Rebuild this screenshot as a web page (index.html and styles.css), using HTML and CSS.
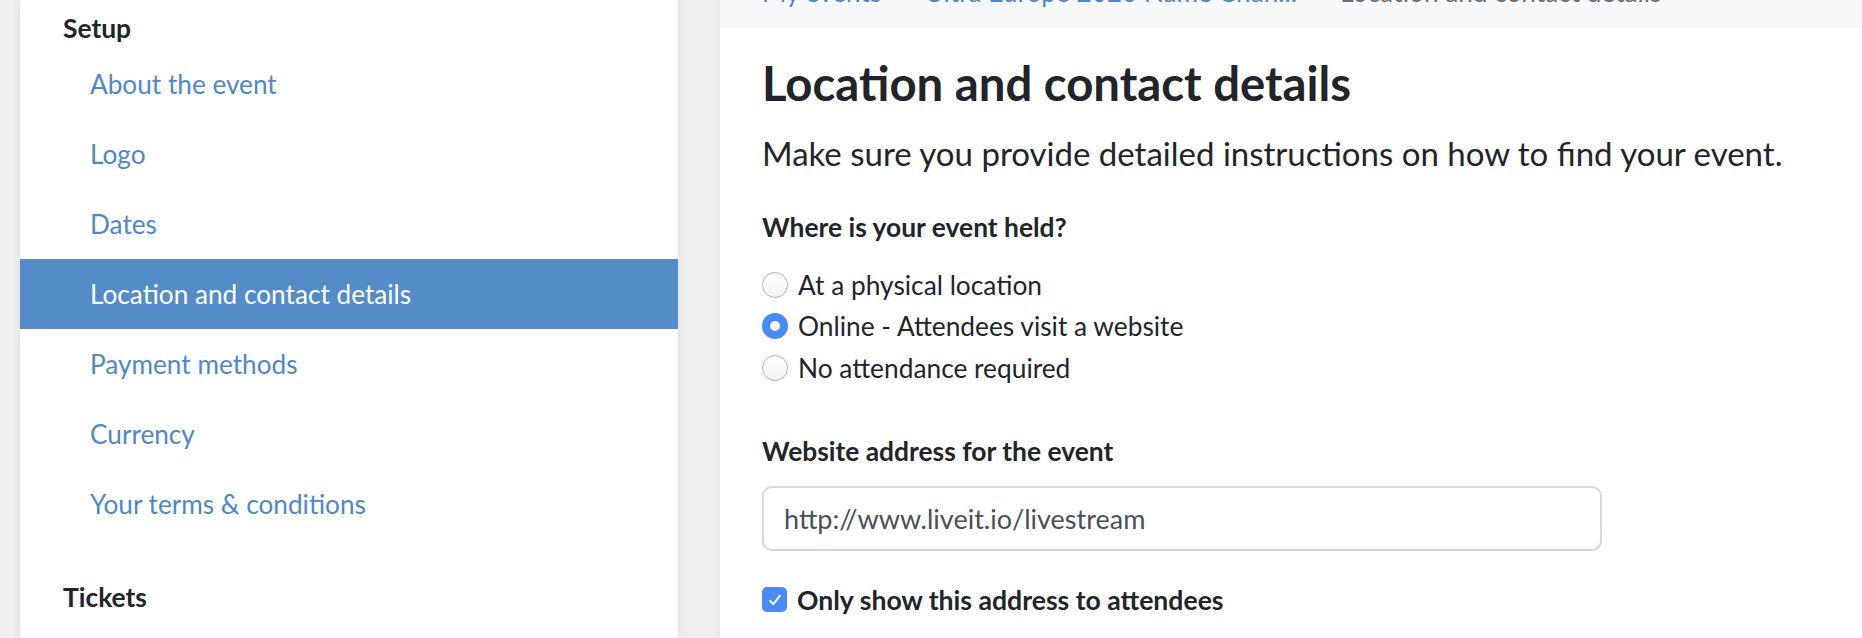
FILE: index.html
```html
<!DOCTYPE html>
<html lang="en">
<head>
<meta charset="utf-8">
<title>Location and contact details</title>
<link rel="stylesheet" href="styles.css">
</head>
<body>
<div class="layout">
  <aside class="sidebar">
    <h3 class="side-heading">Setup</h3>
    <nav class="side-nav">
      <a class="side-link" href="#">About the event</a>
      <a class="side-link" href="#">Logo</a>
      <a class="side-link" href="#">Dates</a>
      <a class="side-link active" href="#">Location and contact details</a>
      <a class="side-link" href="#">Payment methods</a>
      <a class="side-link" href="#">Currency</a>
      <a class="side-link" href="#">Your terms &amp; conditions</a>
    </nav>
    <h3 class="side-heading tickets">Tickets</h3>
  </aside>
  <main class="main">
    <div class="crumbs">
      <div class="crumbs-inner">
        <a href="#">My events</a><span class="sep">›</span><a href="#">Ultra Europe 2020 Name Chan...</a><span class="sep">›</span><span class="current">Location and contact details</span>
      </div>
    </div>
    <div class="content">
      <h1 class="title">Location and contact details</h1>
      <p class="lead">Make sure you provide detailed instructions on how to find your event.</p>
      <div class="field-label">Where is your event held?</div>
      <div class="radios">
        <label class="radio"><span class="radio-dot"></span><span>At a physical location</span></label>
        <label class="radio"><span class="radio-dot checked"></span><span>Online - Attendees visit a website</span></label>
        <label class="radio"><span class="radio-dot"></span><span>No attendance required</span></label>
      </div>
      <div class="field-label second">Website address for the event</div>
      <div class="input">http://www.liveit.io/livestream</div>
      <label class="check">
        <span class="check-box"><svg viewBox="0 0 24 24" width="20" height="20"><path d="M6 12.8l4 4.2L18 6.8" fill="none" stroke="#fff" stroke-width="2.2" stroke-linecap="round" stroke-linejoin="round"/></svg></span>
        <span>Only show this address to attendees</span>
      </label>
    </div>
  </main>
</div>
</body>
</html>
```

FILE: styles.css
```css
* { box-sizing: border-box; }
html, body {
  margin: 0;
  padding: 0;
  height: 100%;
  overflow: hidden;
}
body {
  background: #efefef;
  font-family: Lato, "Noto Sans", sans-serif;
  color: #212529;
}
.layout {
  display: flex;
  gap: 42px;
  padding-left: 20px;
  height: 638px;
}
.sidebar {
  width: 658px;
  flex: none;
  background: #fff;
  box-shadow: 0 0 10px rgba(0,0,0,0.07);
  padding-top: 10px;
}
.side-heading {
  margin: 0;
  padding-left: 43px;
  font-size: 26.4px;
  line-height: 36px;
  font-weight: 700;
  color: #212529;
}
.side-nav {
  display: flex;
  flex-direction: column;
  margin-top: 3px;
}
.side-link {
  display: flex;
  align-items: center;
  height: 70px;
  padding-left: 70px;
  font-size: 26.2px;
  color: #4f88c6;
  text-decoration: none;
}
.side-link.active {
  background: #538cc6;
  color: #fff;
}
.tickets {
  margin-top: 40px;
}
.main {
  flex: 1;
  background: #fff;
  box-shadow: 0 0 10px rgba(0,0,0,0.07);
  min-width: 0;
}
.crumbs {
  height: 28px;
  background: #f7f8fa;
  overflow: hidden;
  padding-left: 42px;
}
.crumbs-inner {
  margin-top: -26px;
  font-size: 26.2px;
  line-height: 36px;
  white-space: nowrap;
  color: #6c6f73;
}
.crumbs-inner a {
  color: #4f88c6;
  text-decoration: none;
}
.sep {
  margin: 0 18px;
  color: #6c6f73;
}
.content {
  padding-left: 42px;
  display: flex;
  flex-direction: column;
  align-items: flex-start;
}
.title {
  margin: 25px 0 0;
  font-size: 47.3px;
  line-height: 60px;
  font-weight: 700;
}
.lead {
  margin: 20px 0 0;
  font-size: 33px;
  line-height: 40px;
}
.field-label {
  margin-top: 36px;
  font-size: 26.4px;
  line-height: 36px;
  font-weight: 700;
}
.field-label.second {
  margin-top: 44px;
}
.radios {
  display: flex;
  flex-direction: column;
  margin-top: 19px;
}
.radio {
  display: flex;
  align-items: center;
  gap: 10px;
  height: 41.5px;
  font-size: 26.3px;
}
.radio-dot {
  width: 26px;
  height: 26px;
  border-radius: 50%;
  border: 1.5px solid #b5b5b5;
  background: linear-gradient(#fff, #f4f4f4);
  flex: none;
}
.radio-dot.checked {
  border: 8px solid #4a8af4;
  background: #fff;
}
.input {
  margin-top: 17px;
  width: 840px;
  height: 65px;
  border: 2px solid #d5d8dc;
  border-radius: 10px;
  padding-left: 20px;
  display: flex;
  align-items: center;
  font-size: 27px;
  color: #495057;
}
.check {
  margin-top: 31px;
  display: flex;
  align-items: center;
  gap: 10px;
  font-size: 26.6px;
  line-height: 36px;
  font-weight: 700;
}
.check-box {
  width: 25px;
  height: 25px;
  border-radius: 5px;
  background: #4a8af4;
  display: flex;
  align-items: center;
  justify-content: center;
  flex: none;
}
```
